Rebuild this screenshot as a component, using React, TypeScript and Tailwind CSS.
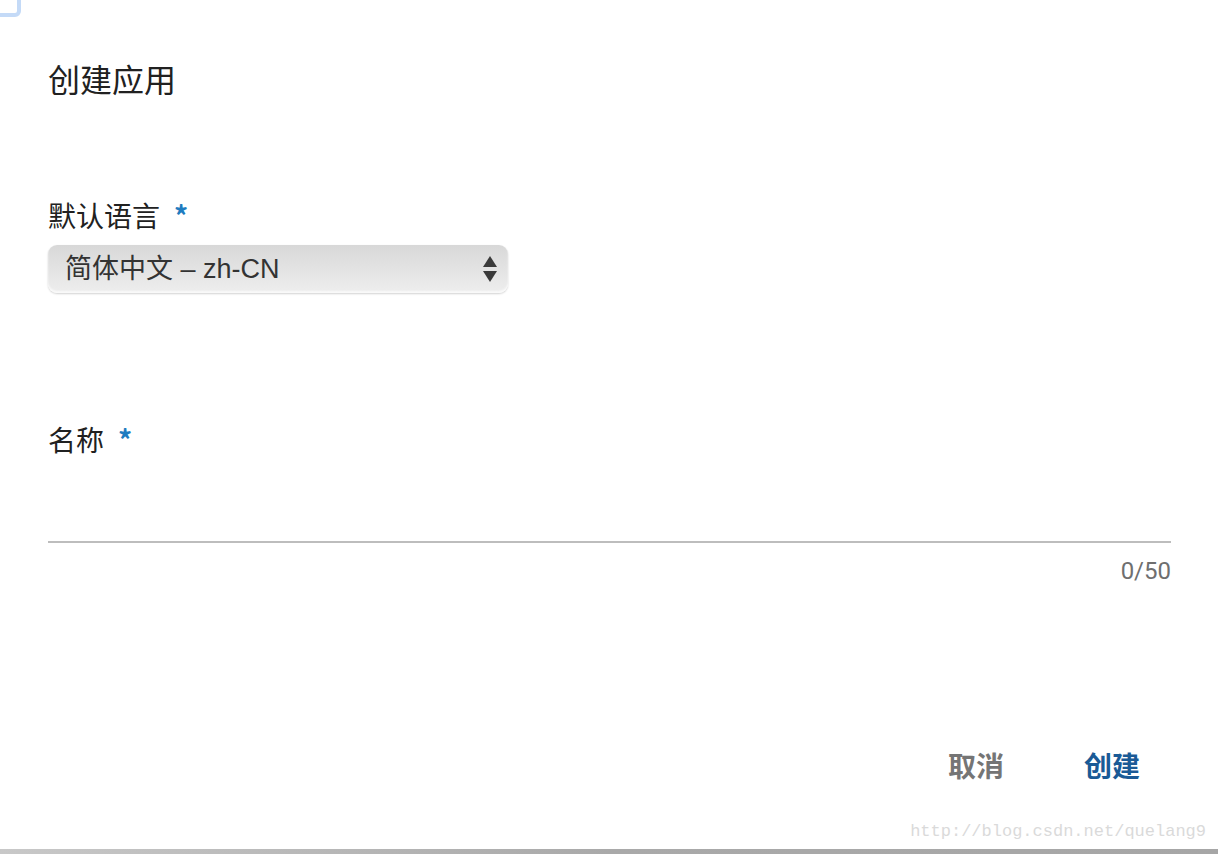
const cjk = { fontFamily: '"Noto Sans CJK SC", "Noto Sans", sans-serif' };
const mixed = { fontFamily: '"Liberation Sans", "Noto Sans CJK SC", sans-serif' };

function Required() {
  return <span className="ml-[14px] text-[#1f7cc0] font-bold">*</span>;
}

export default function App() {
  return (
    <div
      className="relative h-[854px] w-full overflow-hidden bg-white flex flex-col text-[#212121]"
      style={cjk}
    >
      {/* edge of the focused element above, cut off by the window */}
      <div className="absolute -left-[12px] -top-[14px] w-[33px] h-[31px] border-[4px] border-[#c4daf7] rounded-[6px]" />

      <div className="px-[48px] pr-[47px] flex flex-col">
        <h1 className="pt-[58px] text-[32px] leading-[40px] font-normal">创建应用</h1>

        <label className="mt-[99px] text-[28px] leading-[36px] flex items-center">
          默认语言
          <Required />
        </label>
        <div className="mt-[12px] w-[460px] h-[48px] rounded-[9px] bg-gradient-to-b from-[#d8d8d8] via-[#e3e3e3] to-[#eeeeee] shadow-[0_1px_2px_rgba(0,0,0,0.18),inset_0_-2px_2px_rgba(255,255,255,0.7)] flex items-center justify-between pl-[17px] pr-[11px]">
          <span className="text-[27px] leading-[32px] text-[#333333]" style={mixed}>
            简体中文 – zh-CN
          </span>
          <span className="flex flex-col items-center">
            <svg width="14" height="11" viewBox="0 0 14 11">
              <path d="M7 0 L14 11 L0 11 Z" fill="#3a3a3a" />
            </svg>
            <svg width="14" height="11" viewBox="0 0 14 11" className="mt-[4px]">
              <path d="M0 0 L14 0 L7 11 Z" fill="#3a3a3a" />
            </svg>
          </span>
        </div>

        <label className="mt-[128px] text-[28px] leading-[36px] flex items-center">
          名称
          <Required />
        </label>
        <input
          className="mt-[12px] h-[74px] w-full border-b-2 border-[#bdbdbd] outline-none bg-transparent text-[26px]"
          style={cjk}
        />
        <div
          className="mt-[13px] text-right text-[24px] leading-[30px] text-[#6f6f6f]"
          style={{ fontFamily: 'Roboto, "Liberation Sans", sans-serif' }}
        >
          0/50
        </div>

        <div className="mt-[159px] flex justify-end gap-[18px]">
          <button className="px-[31px] text-[28px] leading-[40px] font-bold text-[#757575]" style={cjk}>
            取消
          </button>
          <button className="px-[31px] text-[28px] leading-[40px] font-bold text-[#1a5a96]" style={cjk}>
            创建
          </button>
        </div>
      </div>

      <div className="mt-auto flex justify-end pr-[12px] pb-[6px]">
        <span
          className="text-[17px] leading-[22px] text-[#dadada]"
          style={{ fontFamily: '"Liberation Mono", monospace' }}
        >
          http://blog.csdn.net/quelang9
        </span>
      </div>
      <div className="h-[5px] bg-gradient-to-r from-[#c8c8c8] via-[#a9a9a9] to-[#a6a6a6]" />
    </div>
  );
}
